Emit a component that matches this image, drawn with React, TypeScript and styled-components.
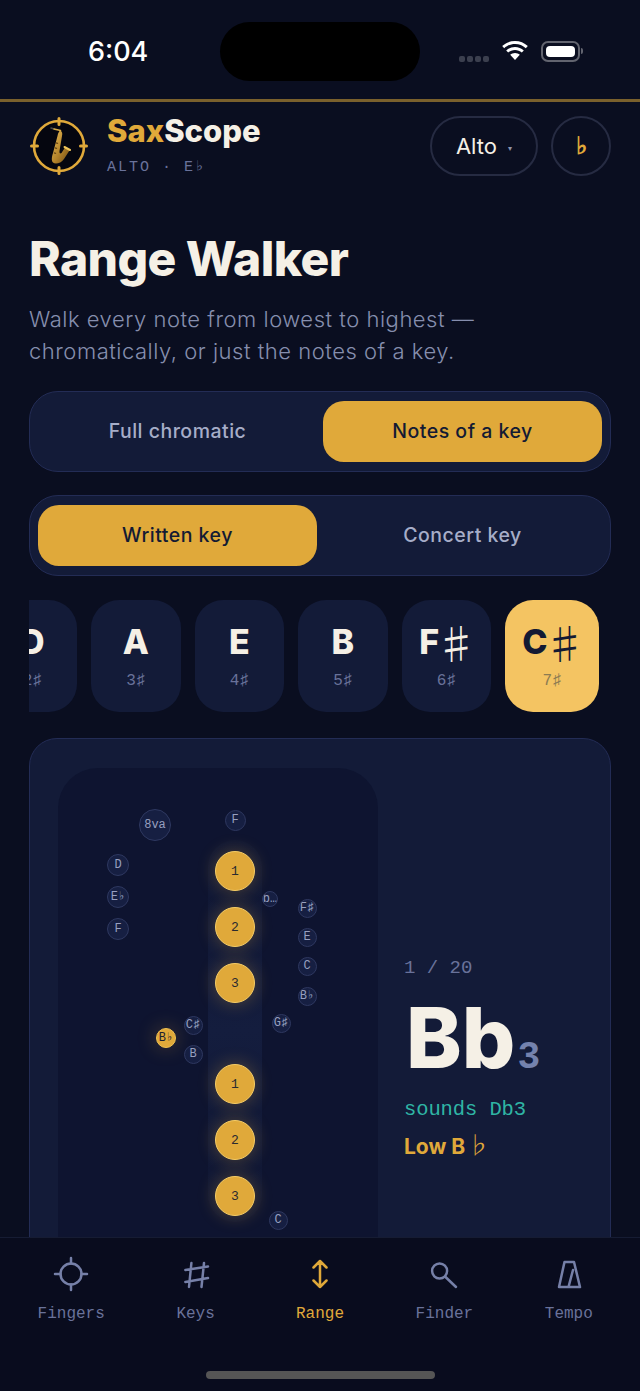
import { ReactNode } from "react";
import styled, { createGlobalStyle } from "styled-components";

const GOLD = "#e0a93a";
const CREAM = "#f5f0e6";
const MUTED = "#69729a";
const NAVY = "#131b38";
const MONO = `"Liberation Mono", "DejaVu Sans Mono", monospace`;
const SANS = `Inter, "Noto Sans", sans-serif`;
const MUSIC = `"Noto Sans CJK JP", "DejaVu Sans", sans-serif`;

const GlobalStyle = createGlobalStyle`
  html, body { margin: 0; padding: 0; background: #0a0e20; }
  * { box-sizing: border-box; }
`;

// keys of the horn, placed on the diagram by their centre
type HornKey = { label: string; x: number; y: number; size: number; active?: boolean };

const SMALL_KEYS: HornKey[] = [
  { label: "8va", x: 97, y: 57, size: 32 },
  { label: "F", x: 177, y: 52, size: 21 },
  { label: "D", x: 60, y: 97, size: 22 },
  { label: "E♭", x: 60, y: 129, size: 22 },
  { label: "F", x: 60, y: 161, size: 22 },
  { label: "b…", x: 212, y: 131, size: 16 },
  { label: "F♯", x: 249, y: 140, size: 19 },
  { label: "E", x: 249, y: 169, size: 19 },
  { label: "C", x: 249, y: 198, size: 19 },
  { label: "B♭", x: 249, y: 228, size: 19 },
  { label: "C♯", x: 135, y: 257, size: 19 },
  { label: "B♭", x: 108, y: 270, size: 20, active: true },
  { label: "B", x: 135, y: 286, size: 19 },
  { label: "G♯", x: 223, y: 255, size: 19 },
  { label: "C", x: 220, y: 452, size: 19 },
];

const MAIN_KEYS: HornKey[] = [
  { label: "1", x: 177, y: 103, size: 40 },
  { label: "2", x: 177, y: 159, size: 40 },
  { label: "3", x: 177, y: 215, size: 40 },
  { label: "1", x: 177, y: 316, size: 40 },
  { label: "2", x: 177, y: 372, size: 40 },
  { label: "3", x: 177, y: 428, size: 40 },
];

const KEY_CHIPS = [
  { note: "D", count: "2♯" },
  { note: "A", count: "3♯" },
  { note: "E", count: "4♯" },
  { note: "B", count: "5♯" },
  { note: "F", sharp: true, count: "6♯" },
  { note: "C", sharp: true, count: "7♯", selected: true },
];

const TabIcon = ({ children, color }: { children: ReactNode; color: string }) => (
  <svg width="36" height="36" viewBox="0 0 36 36" fill="none" stroke={color} strokeWidth="2.5" strokeLinecap="round" strokeLinejoin="round">
    {children}
  </svg>
);

const TABS = [
  {
    label: "Fingers",
    icon: (
      <>
        <circle cx="18" cy="18" r="10.500" />
        <path d="M18 2v5.500M18 28.500V34M2 18h5.500M28.500 18H34" />
      </>
    ),
  },
  { label: "Keys", icon: <path d="M13.400 7L11 31M26 7l-2.500 24M7.400 14L30 10.500M7.400 26L30 22" /> },
  { label: "Range", active: true, icon: <path d="M18 5v26M11.500 11.500L18 5l6.500 6.500M11.500 24.500L18 31l6.500-6.500" /> },
  {
    label: "Finder",
    icon: (
      <>
        <circle cx="13.600" cy="15" r="7.500" />
        <path d="M19 20.500L30 31" />
      </>
    ),
  },
  { label: "Tempo", icon: <path d="M13.500 6h9.500L29 31H8zM17.500 31L22 14" /> },
];

const Sax = () => (
  <svg width="58" height="58" viewBox="0 0 58 58" fill="none">
    <defs>
      <linearGradient id="brass" x1="0" y1="0" x2="1" y2="1">
        <stop offset="0" stopColor="#e8bd58" />
        <stop offset="0.55" stopColor="#b4832a" />
        <stop offset="1" stopColor="#6e4a14" />
      </linearGradient>
    </defs>
    <circle cx="29" cy="29" r="25" fill="#05060f" stroke={GOLD} strokeWidth="2.600" />
    <path d="M29 1.500v6M29 50.500v6M1.500 29h6M50.500 29h6" stroke={GOLD} strokeWidth="3" strokeLinecap="round" />
    <path d="M21 11l3 1" stroke="#4a4a4a" strokeWidth="1.600" strokeLinecap="round" />
    <path d="M24 12l6.500 1.500" stroke="#d8ab48" strokeWidth="1.500" strokeLinecap="round" />
    <path
      d="M30.500 13.500C32.500 15 32.500 17 32 19L29.500 34C29.200 36.500 30.500 37 31.500 36L35 30.500L39.500 33.500L34 42C31 46.500 25 47.500 23 45.500C21 43.500 22 39 23 36L27.500 19C28 16 29 15 29.500 14Z"
      fill="url(#brass)"
    />
    <path d="M34.500 30l5.500 3" stroke="#f0c65a" strokeWidth="2" strokeLinecap="round" />
    <path d="M26.500 26l1 .3M25.500 31l1 .3M24.500 36l1 .3" stroke="#6e4a14" strokeWidth="1.400" strokeLinecap="round" />
  </svg>
);

const Wifi = () => (
  <svg width="28" height="22" viewBox="0 0 28 22" fill="#fff">
    <path d="M14 4c4.200 0 8 1.600 10.800 4.200l2-2.200C23.400 2.900 18.900 1 14 1S4.600 2.900 1.200 6l2 2.200C6 5.600 9.800 4 14 4z" />
    <path d="M14 10c2.600 0 5 1 6.800 2.600l2-2.200C20.400 8.300 17.300 7 14 7s-6.400 1.300-8.800 3.400l2 2.200C9 11 11.400 10 14 10z" />
    <path d="M14 13c-1.800 0-3.500.700-4.800 1.800L14 20l4.800-5.200C17.500 13.700 15.800 13 14 13z" />
  </svg>
);

export default function App() {
  return (
    <Screen>
      <GlobalStyle />
      <StatusBar>
        <Clock>6:04</Clock>
        <Island />
        <StatusIcons>
          <SignalDots>
            <i />
            <i />
            <i />
            <i />
          </SignalDots>
          <Wifi />
          <Battery>
            <span />
          </Battery>
        </StatusIcons>
      </StatusBar>

      <Main>
        <Header>
          <Sax />
          <Brand>
            <BrandName>
              <em>Sax</em>Scope
            </BrandName>
            <BrandSub>ALTO · E♭</BrandSub>
          </Brand>
          <HeaderActions>
            <InstrumentPill>
              Alto <small>▾</small>
            </InstrumentPill>
            <AccidentalButton>♭</AccidentalButton>
          </HeaderActions>
        </Header>

        <Title>Range Walker</Title>
        <Lede>
          Walk every note from lowest to highest —
          <br />
          chromatically, or just the notes of a key.
        </Lede>

        <Segmented>
          <Segment>Full chromatic</Segment>
          <Segment $on>Notes of a key</Segment>
        </Segmented>
        <Segmented>
          <Segment $on>Written key</Segment>
          <Segment>Concert key</Segment>
        </Segmented>

        <ChipRow>
          {KEY_CHIPS.map((chip) => (
            <Chip key={chip.note + chip.count} $selected={chip.selected}>
              <ChipNote>
                {chip.note}
                {chip.sharp && <BigSharp>♯</BigSharp>}
              </ChipNote>
              <ChipCount $selected={chip.selected}>{chip.count}</ChipCount>
            </Chip>
          ))}
        </ChipRow>

        <Card>
          <Diagram>
            <Spine />
            {SMALL_KEYS.map((k) => (
              <SmallKey
                key={`${k.label}-${k.x}-${k.y}`}
                $active={k.active}
                style={{ left: k.x - k.size / 2, top: k.y - k.size / 2, width: k.size, height: k.size }}
              >
                {k.label}
              </SmallKey>
            ))}
            {MAIN_KEYS.map((k) => (
              <MainKey key={k.y} style={{ left: k.x - k.size / 2, top: k.y - k.size / 2 }}>
                {k.label}
              </MainKey>
            ))}
          </Diagram>
          <NoteInfo>
            <Counter>1 / 20</Counter>
            <NoteName>
              Bb<sub>3</sub>
            </NoteName>
            <Sounds>sounds Db3</Sounds>
            <NoteLabel>
              Low B <ThinFlat>♭</ThinFlat>
            </NoteLabel>
          </NoteInfo>
        </Card>
      </Main>

      <TabBar>
        {TABS.map((tab) => (
          <Tab key={tab.label} $active={tab.active}>
            <TabIcon color={tab.active ? GOLD : "#7680a8"}>{tab.icon}</TabIcon>
            {tab.label}
          </Tab>
        ))}
        <HomeIndicator />
      </TabBar>
    </Screen>
  );
}

const Screen = styled.div`
  width: 640px;
  height: 1391px;
  display: flex;
  flex-direction: column;
  overflow: hidden;
  position: relative;
  background: #0a0e20;
  color: ${CREAM};
  font-family: ${SANS};
`;

const StatusBar = styled.div`
  height: 99px;
  flex: none;
  display: flex;
  justify-content: center;
  position: relative;
`;

const Clock = styled.div`
  position: absolute;
  left: 88px;
  top: 35px;
  font: 500 27px/34px Inter, sans-serif;
  color: #fff;
`;

const Island = styled.div`
  width: 200px;
  height: 59px;
  margin-top: 22px;
  border-radius: 30px;
  background: #000;
`;

const StatusIcons = styled.div`
  position: absolute;
  left: 459px;
  top: 40px;
  display: flex;
  align-items: center;
  gap: 10px;
`;

const SignalDots = styled.div`
  display: flex;
  gap: 2px;
  margin-top: 16px;
  margin-right: 2px;
  i {
    width: 6px;
    height: 6px;
    border-radius: 2px;
    background: #3b3f4e;
  }
`;

const Battery = styled.div`
  width: 39px;
  height: 21px;
  margin-left: 2px;
  padding: 3px;
  border: 2px solid #62646f;
  border-radius: 7px;
  position: relative;
  span {
    display: block;
    height: 100%;
    border-radius: 4px;
    background: #fff;
  }
  &::after {
    content: "";
    position: absolute;
    right: -5px;
    top: 5px;
    width: 2px;
    height: 6px;
    background: #62646f;
    border-radius: 0 2px 2px 0;
  }
`;

const Main = styled.main`
  flex: 1;
  min-height: 0;
  overflow: hidden;
  border-top: 3px solid #7a602c;
  padding: 0 29px;
`;

const Header = styled.header`
  display: flex;
  align-items: center;
  height: 60px;
  margin-top: 14px;
  gap: 19px;
  svg {
    margin-left: 1px;
  }
`;

const Brand = styled.div`
  display: flex;
  flex-direction: column;
  margin-top: -1px;
`;

const BrandName = styled.div`
  font: 800 31px/36px ${SANS};
  letter-spacing: 0;
  em {
    font-style: normal;
    color: ${GOLD};
  }
`;

const BrandSub = styled.div`
  font: 400 15px/20px ${MONO};
  letter-spacing: 2px;
  color: ${MUTED};
  margin-top: 9px;
`;

const HeaderActions = styled.div`
  margin-left: auto;
  display: flex;
  gap: 13px;
`;

const InstrumentPill = styled.button`
  width: 108px;
  height: 60px;
  border-radius: 30px;
  border: 2px solid #262b42;
  background: transparent;
  color: ${CREAM};
  font: 400 22px/1 ${SANS};
  small {
    font-size: 8px;
    color: #8d93ab;
    margin-left: 5px;
    vertical-align: 3px;
  }
`;

const AccidentalButton = styled.button`
  width: 60px;
  height: 60px;
  border-radius: 50%;
  border: 2px solid #262b42;
  background: transparent;
  color: ${GOLD};
  font: 700 24px/1 ${SANS};
`;

const Title = styled.h1`
  margin: 54px 0 0;
  font: 800 48px/58px ${SANS};
  letter-spacing: -0.6px;
  color: ${CREAM};
`;

const Lede = styled.p`
  margin: 15px 0 0;
  font: 300 22px/32px ${SANS};
  letter-spacing: 0.52px;
  color: #868eae;
`;

const Segmented = styled.div`
  margin-top: 24px;
  height: 81px;
  padding: 9px 8px;
  display: grid;
  grid-template-columns: 1fr 1fr;
  gap: 6px;
  border: 1px solid #232c55;
  border-radius: 29px;
  background: ${NAVY};
  & + & {
    margin-top: 23px;
  }
`;

const Segment = styled.div<{ $on?: boolean }>`
  display: flex;
  align-items: center;
  justify-content: center;
  border-radius: 21px;
  font: 500 19.500px/1 ${SANS};
  letter-spacing: 0.5px;
  color: ${(p) => (p.$on ? "#131a33" : "#a6adc8")};
  background: ${(p) => (p.$on ? GOLD : "transparent")};
`;

const ChipRow = styled.div`
  margin-top: 24px;
  height: 112px;
  display: flex;
  justify-content: flex-end;
  gap: 14px;
  padding-right: 12px;
  overflow: hidden;
`;

const Chip = styled.div<{ $selected?: boolean }>`
  flex: none;
  width: ${(p) => (p.$selected ? 94 : 89.500)}px;
  height: 112px;
  border-radius: 28px;
  display: flex;
  flex-direction: column;
  align-items: center;
  background: ${(p) => (p.$selected ? "#f4c462" : NAVY)};
  color: ${(p) => (p.$selected ? "#131a33" : CREAM)};
`;

const ChipNote = styled.div`
  margin-top: 22px;
  height: 40px;
  display: flex;
  align-items: center;
  font: 800 34px/40px ${SANS};
  white-space: nowrap;
`;

// the sharp is a thin music glyph, much taller than the letter
const BigSharp = styled.span`
  font: 300 42px/40px ${MUSIC};
  margin: 0 -4px;
`;

const ChipCount = styled.div<{ $selected?: boolean }>`
  margin-top: 9px;
  font: 400 16px/20px ${MONO};
  color: ${(p) => (p.$selected ? "#8c7c52" : MUTED)};
`;

const Card = styled.section`
  margin-top: 26px;
  height: 638px;
  padding: 29px 28px;
  display: flex;
  gap: 26px;
  align-items: center;
  border: 1px solid #232c55;
  border-radius: 28px;
  background: ${NAVY};
`;

const Diagram = styled.div`
  position: relative;
  flex: none;
  width: 320px;
  height: 578px;
  border-radius: 40px;
  background: #0e1430;
`;

const Spine = styled.div`
  position: absolute;
  left: 150px;
  top: 72px;
  width: 54px;
  height: 382px;
  border-radius: 27px;
  background: linear-gradient(180deg, #0f1633 0%, #141d3e 50%, #0f1633 100%);
`;

const SmallKey = styled.div<{ $active?: boolean }>`
  position: absolute;
  display: flex;
  align-items: center;
  justify-content: center;
  border-radius: 50%;
  white-space: nowrap;
  overflow: hidden;
  font: 400 12px/1 ${MONO};
  color: ${(p) => (p.$active ? "#1a2030" : "#98a0c0")};
  background: ${(p) => (p.$active ? GOLD : "#161f42")};
  border: ${(p) => (p.$active ? "1px solid #f0c050" : "1.500px solid #2e3860")};
  box-shadow: ${(p) => (p.$active ? "0 0 20px rgba(224,169,58,0.3)" : "none")};
`;

const MainKey = styled.div`
  position: absolute;
  width: 40px;
  height: 40px;
  display: flex;
  align-items: center;
  justify-content: center;
  border-radius: 50%;
  font: 400 13px/1 ${MONO};
  color: #2a2a30;
  background: ${GOLD};
  border: 1px solid #f5cc66;
  box-shadow: 0 0 18px rgba(224, 169, 58, 0.32);
`;

const NoteInfo = styled.div`
  display: flex;
  flex-direction: column;
  min-width: 0;
`;

const Counter = styled.div`
  font: 400 19px/24px ${MONO};
  color: ${MUTED};
`;

const NoteName = styled.div`
  margin: 12px 0 0 2px;
  font: 800 84px/92px ${SANS};
  letter-spacing: 0;
  color: ${CREAM};
  white-space: nowrap;
  sub {
    font: 700 38px/1 ${MONO};
    letter-spacing: 0;
    color: #7482ad;
    vertical-align: baseline;
    margin-left: 2px;
  }
`;

const Sounds = styled.div`
  margin-top: 12px;
  font: 400 20.500px/28px ${MONO};
  letter-spacing: -0.1px;
  color: #2fb5a5;
  white-space: nowrap;
`;

const NoteLabel = styled.div`
  margin-top: 6px;
  height: 28px;
  font: 700 21px/28px ${SANS};
  color: ${GOLD};
  white-space: nowrap;
`;

const ThinFlat = styled.span`
  font: 300 24px/28px ${MUSIC};
  margin-left: -4px;
`;

const TabBar = styled.nav`
  flex: none;
  height: 154px;
  position: relative;
  z-index: 1;
  display: grid;
  grid-template-columns: repeat(5, 1fr);
  align-items: start;
  padding: 18px 9px 0;
  background: #090c1e;
  border-top: 1px solid #161c33;
`;

const Tab = styled.div<{ $active?: boolean }>`
  display: flex;
  flex-direction: column;
  align-items: center;
  gap: 12px;
  font: 400 16px/20px ${MONO};
  color: ${(p) => (p.$active ? GOLD : MUTED)};
`;

const HomeIndicator = styled.div`
  position: absolute;
  left: 206px;
  top: 133px;
  width: 229px;
  height: 8px;
  border-radius: 4px;
  background: #555;
`;
